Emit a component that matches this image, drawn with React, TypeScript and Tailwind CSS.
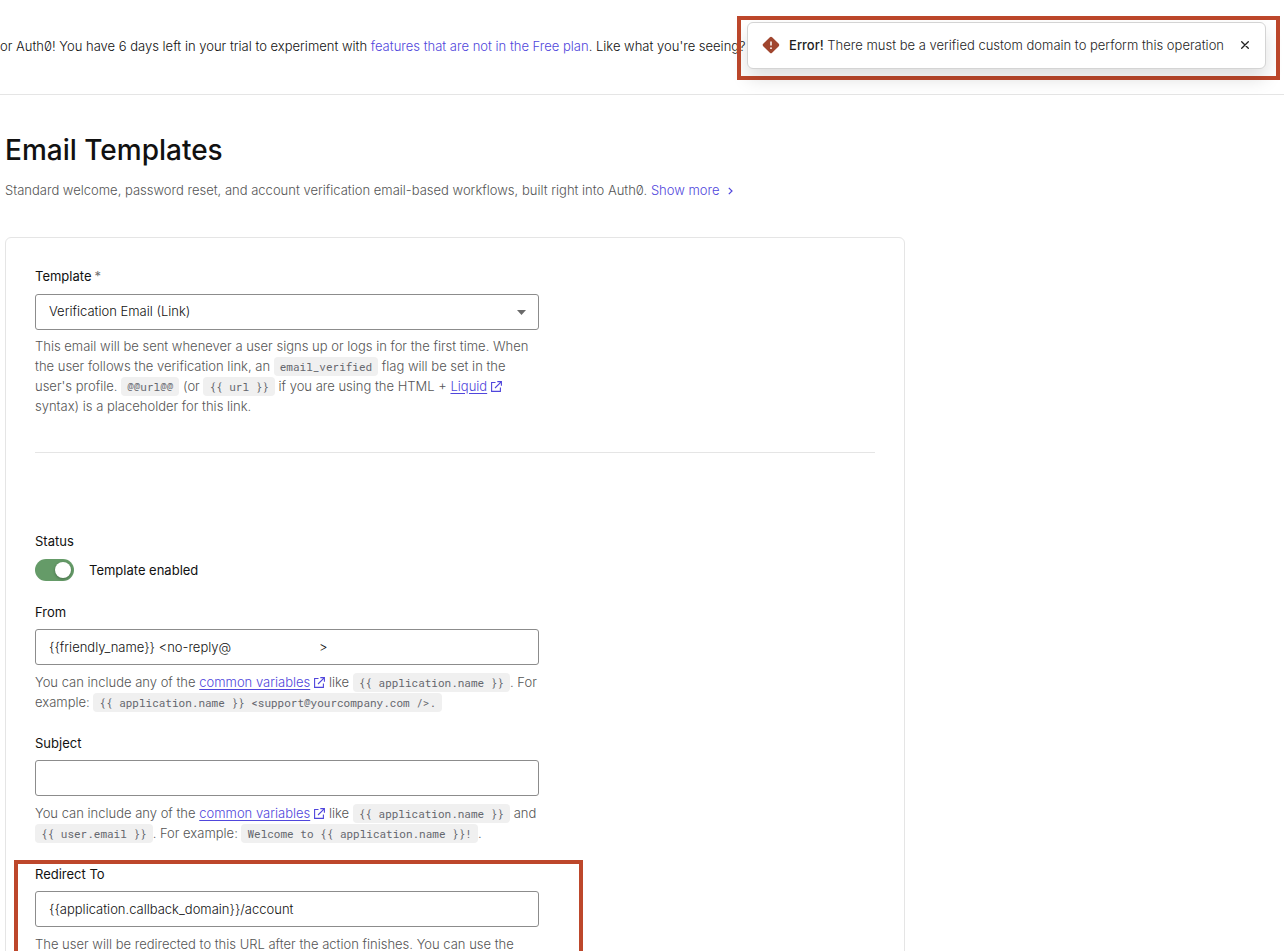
import React, { useState } from 'react';

const Code: React.FC<{ children: React.ReactNode }> = ({ children }) => (
  <code className="rounded bg-[#f0f0f0] px-[6px] py-[2px] font-['Roboto_Mono','Liberation_Mono',monospace] text-[11px] leading-3 font-normal whitespace-pre text-[#65676e]">
    {children}
  </code>
);

const ExternalIcon = () => (
  <svg className="ml-1 inline-block size-[11px] align-[-1px]" viewBox="0 0 11 11" fill="none" stroke="currentColor" aria-hidden="true">
    <path d="M4.5 1.5H0.6V10.4H9.4V6.5" strokeWidth="1.1" />
    <path d="M6.3 0.6H10.4V4.7M10.2 0.8L4 7" strokeWidth="1.1" />
  </svg>
);

const ExternalLink: React.FC<{ children: React.ReactNode }> = ({ children }) => (
  <a href="#" className="text-[#5046dc]">
    <span className="underline underline-offset-2">{children}</span>
    <ExternalIcon />
  </a>
);

interface FieldProps {
  id: string;
  label: string;
  defaultValue?: string;
  children: React.ReactNode;
}

const Field: React.FC<FieldProps> = ({ id, label, defaultValue = '', children }) => (
  <div className="w-full">
    <label htmlFor={id} className="block font-normal">
      {label}
    </label>
    <input
      id={id}
      type="text"
      defaultValue={defaultValue}
      className="mt-[7px] block h-9 w-full rounded-[3px] border border-[#8c8c8c] bg-white px-[13px] outline-none"
    />
    <p className="mt-[7px] text-[#555]">{children}</p>
  </div>
);

const Toast: React.FC<{ onClose: () => void }> = ({ onClose }) => (
  <div className="absolute top-4 right-1 border-4 border-[#bd472b] p-0.5 pr-[10px] pb-[7px] pl-[6px]">
    <div
      role="alert"
      className="flex h-[47px] items-center rounded-md border border-[#d4d4d4] bg-white pr-3 pb-px pl-[14px] shadow-[0_10px_18px_rgba(0,0,0,0.13)]"
    >
      <svg className="size-[18px]" viewBox="0 0 18 18" aria-hidden="true">
        <rect x="2.7" y="2.7" width="12.6" height="12.6" rx="1.6" fill="#a0452e" transform="rotate(45 9 9)" />
        <path d="M9 5.4V9.6" stroke="#fff" strokeWidth="1.5" />
        <circle cx="9" cy="12.2" r="0.9" fill="#fff" />
      </svg>
      <p className="ml-[9px] whitespace-nowrap text-[#1e1e1e]">
        <strong className="font-medium">Error!</strong> There must be a verified custom domain to perform this operation
      </p>
      <button type="button" aria-label="Close" onClick={onClose} className="ml-[13px] flex size-4 items-center justify-center">
        <svg className="size-2" viewBox="0 0 8 8" fill="none" stroke="#222" strokeWidth="1.3" strokeLinecap="round">
          <path d="M0.7 0.7L7.3 7.3M7.3 0.7L0.7 7.3" />
        </svg>
      </button>
    </div>
  </div>
);

export default function App() {
  const [toastOpen, setToastOpen] = useState(true);
  const [enabled, setEnabled] = useState(true);

  return (
    <div className="relative h-screen overflow-hidden bg-white font-['Inter',sans-serif] text-[13px] leading-5 font-light text-[#111]">
      {/* Trial banner */}
      <header className="flex h-[95px] items-center overflow-hidden border-b border-[#e5e5e5] pb-0.5">
        <p className="whitespace-nowrap slashed-zero">
          or Auth0! You have 6 days left in your trial to experiment with{' '}
          <a href="#" className="text-[#5046dc]">features that are not in the Free plan</a>. Like what you're seeing? P
        </p>
      </header>

      {toastOpen && <Toast onClose={() => setToastOpen(false)} />}

      <main className="max-w-[905px] pt-[37px] pl-[5px]">
        <h1 className="text-[28px] leading-9 font-medium">Email Templates</h1>
        <p className="mt-3 text-[#555] slashed-zero">
          Standard welcome, password reset, and account verification email-based workflows, built right into Auth0.{' '}
          <a href="#" className="text-[#5046dc]">
            Show more
            <svg className="ml-2 inline-block h-2 w-[5px] align-baseline" viewBox="0 0 5 8" fill="none" stroke="currentColor" strokeWidth="1.2" aria-hidden="true">
              <path d="M0.8 0.8L4 4L0.8 7.2" />
            </svg>
          </a>
        </p>

        <section className="mt-[37px] rounded-md border border-[#e5e5e5] px-[29px] pt-7 pb-[29px]">
          {/* Template */}
          <div className="w-3/5">
            <label htmlFor="template" className="block font-normal">
              Template<span className="ml-[3px] text-[#6f6f6f]">*</span>
            </label>
            <div className="relative mt-2">
              <select
                id="template"
                className="block h-9 w-full appearance-none rounded-[3px] border border-[#8c8c8c] bg-white px-[13px] pb-0.5 outline-none"
              >
                <option>Verification Email (Link)</option>
              </select>
              <svg className="pointer-events-none absolute top-4 right-[13px] h-[5px] w-[9px]" viewBox="0 0 9 5" aria-hidden="true">
                <path d="M0 0H9L4.5 5Z" fill="#6a6a6a" />
              </svg>
            </div>
            <p className="mt-[6px] text-[#555]">
              This email will be sent whenever a user signs up or logs in for the first time. When the user follows the
              verification link, an <Code>email_verified</Code> flag will be set in the user's profile.{' '}
              <Code>@@url@@</Code> (or <Code>{'{{ url }}'}</Code> if you are using the HTML +{' '}
              <ExternalLink>Liquid</ExternalLink> syntax) is a placeholder for this link.
            </p>
          </div>

          <hr className="mt-9 border-[#e5e5e5]" />

          <div className="mt-[78px] flex w-3/5 flex-col gap-[21px]">
            <div>
              <span className="block font-normal">Status</span>
              <label className="mt-2 flex items-center gap-[15px] font-normal">
                <input
                  type="checkbox"
                  role="switch"
                  checked={enabled}
                  onChange={() => setEnabled(!enabled)}
                  className="flex h-[22px] w-[39px] appearance-none items-center rounded-full bg-gray-400 px-[3px] before:size-4 before:rounded-full before:bg-white before:shadow-[0_1px_3px_rgba(0,0,0,0.3)] checked:justify-end checked:bg-[#659b68]"
                />
                Template enabled
              </label>
            </div>

            <Field id="from" label="From" defaultValue={'{{friendly_name}} <no-reply@' + '\u00a0'.repeat(24) + '>'}>
              You can include any of the <ExternalLink>common variables</ExternalLink> like{' '}
              <Code>{'{{ application.name }}'}</Code>. For example:{' '}
              <Code>{'{{ application.name }} <support@yourcompany.com />.'}</Code>
            </Field>

            <Field id="subject" label="Subject">
              You can include any of the <ExternalLink>common variables</ExternalLink> like{' '}
              <Code>{'{{ application.name }}'}</Code> and <Code>{'{{ user.email }}'}</Code>. For example:{' '}
              <Code>{'Welcome to {{ application.name }}!'}</Code>.
            </Field>

            <div className="relative">
              <Field id="redirect" label="Redirect To" defaultValue="{{application.callback_domain}}/account">
                The user will be redirected to this URL after the action finishes. You can use the
              </Field>
              <div className="pointer-events-none absolute -top-1 -right-11 -bottom-6 -left-[21px] border-4 border-[#bd472b]" />
            </div>
          </div>
        </section>
      </main>
    </div>
  );
}
